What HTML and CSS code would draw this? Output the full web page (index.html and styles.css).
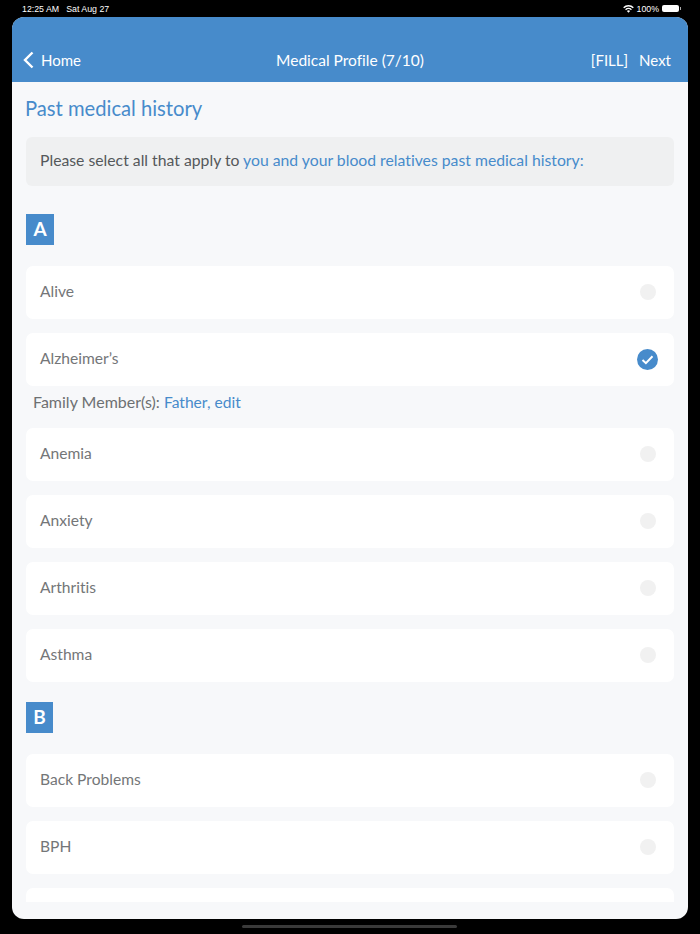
FILE: index.html
```html
<!DOCTYPE html>
<html lang="en">
<head>
<meta charset="utf-8">
<title>Medical Profile</title>
<link rel="stylesheet" href="styles.css">
</head>
<body>
<div class="status">
  <div class="status-left"><span>12:25 AM</span><span>Sat Aug 27</span></div>
  <div class="status-right">
    <svg class="wifi" width="11" height="8" viewBox="0 0 12 9"><path d="M6 8.800 4.200 6.800a2.600 2.600 0 0 1 3.600 0zM3.200 5.800 2.200 4.700a5.500 5.500 0 0 1 7.600 0L8.800 5.800a4 4 0 0 0-5.600 0zM1.200 3.700 0 2.500a8.500 8.500 0 0 1 12 0L10.800 3.700a7 7 0 0 0-9.600 0z" fill="#fff"/></svg>
    <span>100%</span>
    <span class="battery"></span>
  </div>
</div>
<main class="screen">
  <header class="nav">
    <div class="nav-left">
      <svg width="11" height="18" viewBox="0 0 11 18"><path d="M9.500 1.500 2 9l7.500 7.500" fill="none" stroke="#fff" stroke-width="2.400"/></svg>
      <span>Home</span>
    </div>
    <div class="nav-title">Medical Profile (7/10)</div>
    <div class="nav-right"><span>[FILL]</span><span>Next</span></div>
  </header>
  <div class="content">
    <h1 class="title">Past medical history</h1>
    <p class="notice">Please select all that apply to <span class="link">you and your blood relatives past medical history:</span></p>
    <div class="letter">A</div>
    <div class="rows rows-first">
      <div class="row"><span>Alive</span><i class="dot"></i></div>
      <div class="row"><span>Alzheimer’s</span>
        <svg class="check" width="21" height="21" viewBox="0 0 21 21"><circle cx="10.500" cy="10.500" r="10.500" fill="#478bcb"/><path d="M5.500 11l3.400 3.200 6.600-6.900" fill="none" stroke="#fff" stroke-width="2"/></svg>
      </div>
      <div class="family">Family Member(s): <span class="link family-link">Father, edit</span></div>
      <div class="row"><span>Anemia</span><i class="dot"></i></div>
      <div class="row"><span>Anxiety</span><i class="dot"></i></div>
      <div class="row"><span>Arthritis</span><i class="dot"></i></div>
      <div class="row"><span>Asthma</span><i class="dot"></i></div>
    </div>
    <div class="letter letter-b">B</div>
    <div class="rows">
      <div class="row"><span>Back Problems</span><i class="dot"></i></div>
      <div class="row"><span>BPH</span><i class="dot"></i></div>
      <div class="row"></div>
    </div>
  </div>
</main>
<div class="home-bar"></div>
</body>
</html>
```
FILE: styles.css
```css
* { box-sizing: border-box; }
html, body { margin: 0; height: 100%; }
body {
  width: 700px;
  height: 934px;
  background: #000;
  font-family: "Lato", "Open Sans", sans-serif;
  font-variant-ligatures: none;
  overflow: hidden;
  display: flex;
  flex-direction: column;
  align-items: center;
}
.status {
  width: 100%;
  height: 17px;
  flex: none;
  padding: 0 21px 0 22px;
  display: flex;
  justify-content: space-between;
  align-items: center;
  color: #fff;
  font: 8.800px/16px "Liberation Sans", sans-serif;
}
.status-left { display: flex; gap: 7px; }
.status-right { display: flex; align-items: center; gap: 3px; }
.battery {
  width: 17px;
  height: 7px;
  border-radius: 2px;
  background: #fff;
  display: block;
  position: relative;
}
.battery::after {
  content: "";
  position: absolute;
  right: -2px;
  top: 2px;
  width: 1px;
  height: 3px;
  background: #aaa;
}
.screen {
  width: 676px;
  height: 902px;
  flex: none;
  border-radius: 12px;
  overflow: hidden;
  background: #f7f8fa;
  display: flex;
  flex-direction: column;
}
.nav {
  height: 65px;
  flex: none;
  background: #478bcb;
  color: #fff;
  font-size: 15px;
  padding: 31px 17px 0 11px;
  display: flex;
  justify-content: space-between;
  align-items: flex-start;
  line-height: 24px;
  position: relative;
}
.nav-left { display: flex; align-items: center; gap: 7px; }
.nav-title {
  position: absolute;
  left: 0;
  right: 0;
  top: 31px;
  font-size: 15.500px;
  text-align: center;
}
.nav-right { display: flex; gap: 11px; }
.content {
  height: 820px;
  flex: none;
  padding: 0 14px;
  overflow: hidden;
}
.title {
  margin: 13px 0 0 -1px;
  font-size: 20.200px;
  font-weight: 400;
  line-height: 26px;
  color: #478bcb;
}
.notice {
  margin: 16px 0 0;
  height: 49px;
  border-radius: 6px;
  background: #eff0f1;
  padding: 0 14px;
  color: #55585b;
  font-size: 15.750px;
  line-height: 46px;
}
.link { color: #478bcb; }
.letter {
  width: 28px;
  height: 31px;
  margin-top: 28px;
  background: #478bcb;
  color: #fff;
  font-size: 19px;
  font-weight: 700;
  line-height: 30px;
  text-align: center;
}
.letter-b { width: 27px; margin-top: 20px; }
.rows { display: flex; flex-direction: column; gap: 14px; margin-top: 21px; }
.row {
  height: 53px;
  flex: none;
  border-radius: 7px;
  background: #fff;
  padding: 0 16px 0 14px;
  display: flex;
  justify-content: space-between;
  align-items: center;
  color: #747678;
  font-size: 15.600px;
}
.row span { margin-top: -4px; }
.dot {
  width: 16px;
  height: 16px;
  margin: -1px 2px 0 0;
  border-radius: 50%;
  background: #f1f1f1;
}
.family {
  margin: -10px 0 0;
  height: 24px;
  padding-left: 7px;
  color: #6d7072;
  font-size: 16px;
  line-height: 24px;
}
.family-link { font-size: 15.600px; }
.home-bar {
  position: absolute;
  left: 242px;
  top: 925px;
  width: 215px;
  height: 3px;
  border-radius: 2px;
  background: #3a3a3a;
}
```
